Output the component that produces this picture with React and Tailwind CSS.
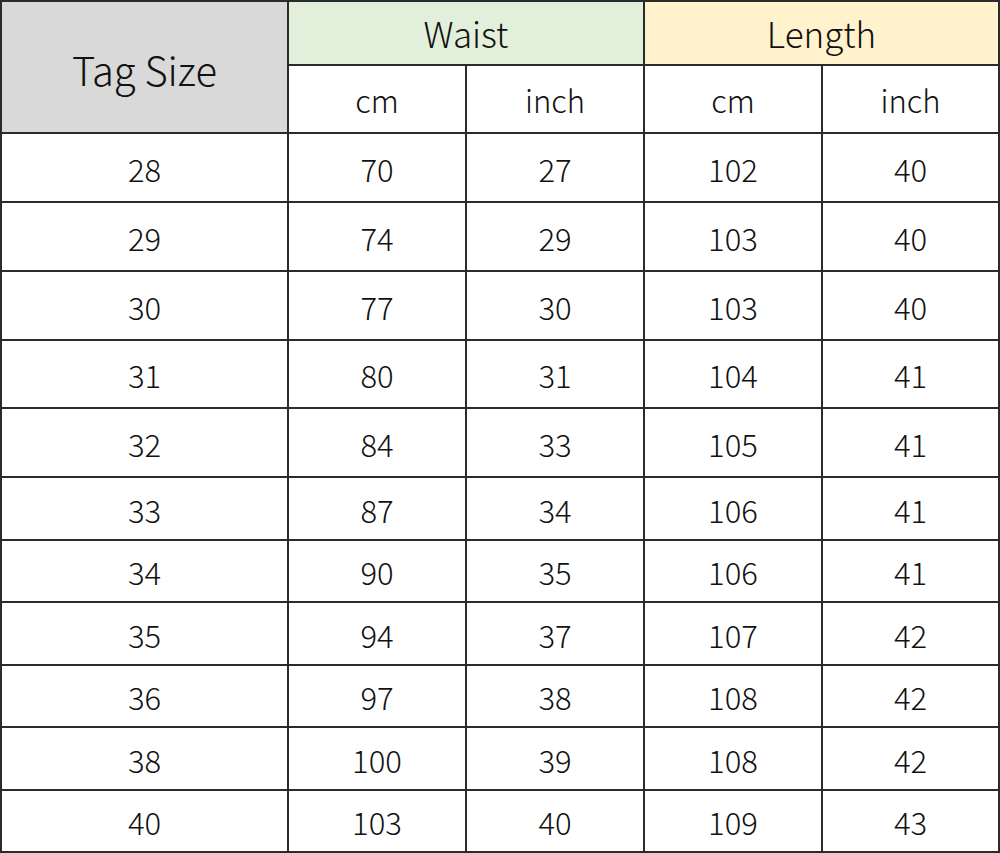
import React from "react";

const rows = [
  ["28", "70", "27", "102", "40"],
  ["29", "74", "29", "103", "40"],
  ["30", "77", "30", "103", "40"],
  ["31", "80", "31", "104", "41"],
  ["32", "84", "33", "105", "41"],
  ["33", "87", "34", "106", "41"],
  ["34", "90", "35", "106", "41"],
  ["35", "94", "37", "107", "42"],
  ["36", "97", "38", "108", "42"],
  ["38", "100", "39", "108", "42"],
  ["40", "103", "40", "109", "43"],
];

export default function App() {
  return (
    <div
      className="w-[1000px] h-[853px] bg-[#2b2b2b] p-[2px] grid gap-[2px] grid-cols-[285px_176px_176px_176px_175px] grid-rows-[62px_66px_67px_67px_67px_66px_67px_61px_60px_61px_60px_61px_60px] text-[#111111] font-light"
      style={{ fontFamily: '"Noto Sans CJK SC", "Noto Sans", sans-serif' }}
    >
      <div className="row-span-2 bg-[#d9d9d9] flex items-center justify-center text-[40px] pt-[3px]">
        Tag Size
      </div>
      <div className="col-span-2 bg-[#e2efda] flex items-center justify-center text-[35px] pt-[1px]">
        Waist
      </div>
      <div className="col-span-2 bg-[#fff2cc] flex items-center justify-center text-[35px] pt-[1px]">
        Length
      </div>
      {["cm", "inch", "cm", "inch"].map((u, i) => (
        <div key={i} className="bg-white flex items-center justify-center text-[31px] pt-[3px]">
          {u}
        </div>
      ))}
      {rows.map((r, ri) =>
        r.map((c, ci) => (
          <div key={ri + "-" + ci} className="bg-white flex items-center justify-center text-[31px] pt-[3px]">
            {c}
          </div>
        ))
      )}
    </div>
  );
}
